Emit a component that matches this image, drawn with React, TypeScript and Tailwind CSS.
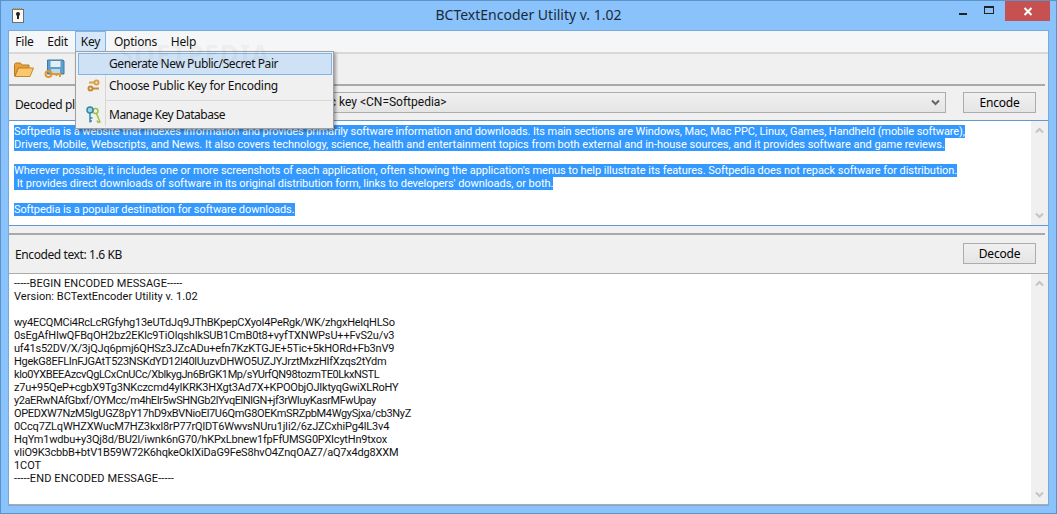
const selectedLines = [
  { text: "Softpedia is a website that indexes information and provides primarily software information and downloads. Its main sections are Windows, Mac, Mac PPC, Linux, Games, Handheld (mobile software),", tracking: "tracking-[-0.09px]" },
  { text: "Drivers, Mobile, Webscripts, and News. It also covers technology, science, health and entertainment topics from both external and in-house sources, and it provides software and game reviews.", tracking: "tracking-[-0.005px]" },
  { text: "", tracking: "" },
  { text: "Wherever possible, it includes one or more screenshots of each application, often showing the application's menus to help illustrate its features. Softpedia does not repack software for distribution.", tracking: "tracking-[-0.05px]" },
  { text: "\u00a0It provides direct downloads of software in its original distribution form, links to developers' downloads, or both.", tracking: "tracking-[-0.055px]" },
  { text: "", tracking: "" },
  { text: "Softpedia is a popular destination for software downloads.", tracking: "tracking-[-0.09px]" },
];

const encodedLines = [
  { text: "-----BEGIN ENCODED MESSAGE-----", tracking: "tracking-[0.06px]" },
  { text: "Version: BCTextEncoder Utility v. 1.02", tracking: "tracking-[0.04px]" },
  { text: "", tracking: "" },
  { text: "wy4ECQMCi4RcLcRGfyhg13eUTdJq9JThBKpepCXyoI4PeRgk/WK/zhgxHeIqHLSo", tracking: "tracking-[-0.25px]" },
  { text: "0sEgAfHIwQFBqOH2bz2EKlc9TiOlqshIkSUB1CmB0t8+vyfTXNWPsU++FvS2u/v3", tracking: "tracking-[-0.16px]" },
  { text: "uf41s52DV/X/3jQJq6pmj6QHSz3JZcADu+efn7KzKTGJE+5Tic+5kHORd+Fb3nV9", tracking: "tracking-[-0.21px]" },
  { text: "HgekG8EFLInFJGAtT523NSKdYD12l40lUuzvDHWO5UZJYJrztMxzHIfXzqs2tYdm", tracking: "tracking-[-0.28px]" },
  { text: "klo0YXBEEAzcvQgLCxCnUCc/XblkygJn6BrGK1Mp/sYUrfQN98tozmTE0LkxNSTL", tracking: "tracking-[-0.41px]" },
  { text: "z7u+95QeP+cgbX9Tg3NKczcmd4yIKRK3HXgt3Ad7X+KPOObjOJIktyqGwiXLRoHY", tracking: "tracking-[-0.21px]" },
  { text: "y2aERwNAfGbxf/OYMcc/m4hEIr5wSHNGb2lYvqElNlGN+jf3rWIuyKasrMFwUpay", tracking: "tracking-[-0.42px]" },
  { text: "OPEDXW7NzM5lgUGZ8pY17hD9xBVNioEl7U6QmG8OEKmSRZpbM4WgySjxa/cb3NyZ", tracking: "tracking-[-0.33px]" },
  { text: "0Ccq7ZLqWHZXWucM7HZ3kxl8rP77rQlDT6WwvsNUru1jIi2/6zJZCxhiPg4lL3v4", tracking: "tracking-[-0.17px]" },
  { text: "HqYm1wdbu+y3Qj8d/BU2l/iwnk6nG70/hKPxLbnew1fpFfUMSG0PXIcytHn9txox", tracking: "tracking-[-0.22px]" },
  { text: "vIiO9K3cbbB+btV1B59W72K6hqkeOkIXiDaG9FeS8hvO4ZnqOAZ7/aQ7x4dg8XXM", tracking: "tracking-[-0.19px]" },
  { text: "1COT", tracking: "tracking-[-0.1px]" },
  { text: "-----END ENCODED MESSAGE-----", tracking: "tracking-[0.12px]" },
];

function FolderIcon() {
  return (
    <svg width="21" height="20" viewBox="0 0 21 20">
      <path d="M1.5 17V5.5L2.5 4h5l1.5 2h7v3H5L2 17z" fill="#e8a33c" stroke="#b87a25" />
      <path d="M2 17.5 5.5 9h15l-3.5 8.5z" fill="#fbc76b" stroke="#c5882d" />
    </svg>
  );
}

function SaveKeyIcon() {
  return (
    <svg width="21" height="20" viewBox="0 0 21 20">
      <path d="M3.5 1h15.5l1 1v13h-16.500z" fill="#5f9fc8" stroke="#3d7ba6" />
      <rect x="6.500" y="2" width="10" height="6" fill="#e3eef5" />
      <rect x="7" y="10" width="9" height="5" fill="#bcd8ea" />
      <circle cx="4.500" cy="15" r="3" fill="none" stroke="#e09a2e" strokeWidth="2" />
      <path d="M7.500 15H16v3M12.500 15v2" fill="none" stroke="#e09a2e" strokeWidth="2" />
    </svg>
  );
}

function KeysSmallIcon() {
  return (
    <svg width="13" height="13" viewBox="0 0 13 13">
      <circle cx="3.500" cy="9.500" r="2" fill="none" stroke="#c98a34" strokeWidth="2" />
      <path d="M5.500 9.500H12" stroke="#c98a34" strokeWidth="2" />
      <circle cx="9.500" cy="3.500" r="2" fill="none" stroke="#d8a24c" strokeWidth="2" />
      <path d="M7.500 3.500H2" stroke="#d8a24c" strokeWidth="2" />
    </svg>
  );
}

function KeyDatabaseIcon() {
  return (
    <svg width="16" height="18" viewBox="0 0 16 18">
      <circle cx="10.500" cy="5" r="2.500" fill="none" stroke="#a3bf4a" strokeWidth="1.500" />
      <path d="M11.500 7.500 15 16l-2 .5-1-2" fill="none" stroke="#a3bf4a" strokeWidth="1.500" />
      <circle cx="5" cy="4" r="3" fill="#9fd4e0" stroke="#2f8ba5" strokeWidth="1.500" />
      <path d="M5 7v9.500M5 12h2.500M5 15h2" fill="none" stroke="#2f8ba5" strokeWidth="1.500" />
    </svg>
  );
}

function AppIcon() {
  return (
    <svg width="12" height="15" viewBox="0 0 12 15">
      <rect x="0.500" y="1.500" width="11" height="13" fill="#fbfbf3" stroke="#6d6d6d" />
      <path d="M1 1h1M3 1h1M5 1h1M7 1h1M9 1h1" stroke="#a58a2b" strokeWidth="2" />
      <circle cx="6" cy="6" r="2" fill="#222" />
      <rect x="5" y="7" width="2" height="4" fill="#222" />
    </svg>
  );
}

function ChevronIcon({ dir, color }: { dir: "up" | "down"; color: string }) {
  return (
    <svg width="9" height="7" viewBox="0 0 9 7">
      <path d={dir === "up" ? "M1 5.500 4.500 2 8 5.500" : "M1 1.500 4.500 5 8 1.500"} fill="none" stroke={color} strokeWidth="2" />
    </svg>
  );
}

function Scrollbar() {
  return (
    <div className="flex w-[17px] shrink-0 flex-col items-center justify-between bg-[#f0f0f0] py-[6px]">
      <ChevronIcon dir="up" color="#c4c4c4" />
      <ChevronIcon dir="down" color="#c4c4c4" />
    </div>
  );
}

function Button({ label }: { label: string }) {
  return (
    <div className="flex h-[21px] w-[73px] shrink-0 items-center justify-center border border-[#acacac] bg-gradient-to-b from-[#f0f0f0] to-[#e5e5e5] text-[#000]">
      {label}
    </div>
  );
}

function MenuItem({ label, className }: { label: string; className: string }) {
  return <div className={`flex h-[21px] items-center justify-center ${className}`}>{label}</div>;
}

function KeyMenu() {
  return (
    <div className="absolute left-[66px] top-[20px] flex h-[78px] w-[259px] flex-col border border-[#a0a0a0] bg-[#f0f0f0] p-px shadow-[2px_2px_3px_rgba(0,0,0,0.35)]">
      <div className="ml-px flex h-[22px] w-[254px] items-center border border-[#7fb4e8] bg-[#cfe2f5] pb-[1px] pl-[30px] tracking-[-0.42px]">
        Generate New Public/Secret Pair
      </div>
      <div className="ml-px flex h-[21px] items-center">
        <span className="flex w-[28px] justify-center pl-[2px]">
          <KeysSmallIcon />
        </span>
        <span className="ml-[3px] tracking-[-0.28px]">Choose Public Key for Encoding</span>
      </div>
      <div className="ml-[28px] mt-[4px] h-px bg-[#d7d7d7]" />
      <div className="ml-px flex flex-1 items-center pt-px">
        <span className="flex w-[28px] justify-center pl-[2px]">
          <KeyDatabaseIcon />
        </span>
        <span className="ml-[3px] tracking-[-0.5px]">Manage Key Database</span>
      </div>
      <div className="absolute bottom-[2px] left-[29px] top-[23px] w-px bg-[#d7d7d7]" />
    </div>
  );
}

export default function App() {
  return (
    <div className="flex h-[514px] w-[1057px] flex-col overflow-hidden border border-[#5b93c9] bg-[#8ac3fb] font-['Noto_Sans',sans-serif] text-[12px] leading-[13px] tracking-[-0.2px] text-[#111]">
      {/* title bar */}
      <div className="relative flex h-[29px] shrink-0 items-center pl-[11px]">
        <AppIcon />
        <div className="absolute left-0 right-0 top-[5px] text-center text-[14px] leading-[18px] tracking-normal text-[#1a2a3a]">
          BCTextEncoder Utility v. 1.02
        </div>
        <div className="ml-auto flex h-[20px] self-start">
          <div className="flex w-[26px] items-end justify-center pb-[6px]">
            <div className="h-[2px] w-[8px] bg-[#222]" />
          </div>
          <div className="flex w-[26px] items-center justify-center pb-[2px]">
            <div className="h-[8px] w-[10px] border border-t-2 border-[#222]" />
          </div>
          <div className="ml-[3px] mr-[6px] flex w-[45px] items-center justify-center bg-[#c75050]">
            <svg width="10" height="9" viewBox="0 0 10 9">
              <path d="M1.500 1 8.500 8M8.500 1 1.500 8" stroke="#fff" strokeWidth="2" />
            </svg>
          </div>
        </div>
      </div>

      {/* client area */}
      <div className="relative mx-[7px] mb-[7px] flex min-h-0 flex-1 flex-col border border-[#7ba9d6] bg-[#f0f0f0]">
        {/* menu bar */}
        <div className="flex h-[21px] shrink-0 bg-[#f5f6f7]">
          <MenuItem label="File" className="w-[31px]" />
          <MenuItem label="Edit" className="w-[35px]" />
          <MenuItem label="Key" className="w-[31px] border border-[#7fb4e8] bg-[#d5e7f8]" />
          <MenuItem label="Options" className="w-[59px]" />
          <MenuItem label="Help" className="w-[37px]" />
        </div>

        {/* toolbar */}
        <div className="flex h-[32px] shrink-0 items-center gap-[10px] border-t-2 border-[#d8d8d8] pl-[4px]">
          <FolderIcon />
          <SaveKeyIcon />
        </div>

        {/* decoded row */}
        <div className="mr-[3px] flex h-[36px] shrink-0 items-center border-t-2 border-[#a9a9a9] pb-[2px] pl-[6px] pr-[9px]">
          <span className="w-[150px] shrink-0 pt-[4px] tracking-[-0.4px]">Decoded plain text: 600 B</span>
          <div className="ml-[6px] flex h-[21px] flex-1 items-center justify-between border border-[#acacac] bg-gradient-to-b from-[#f0f0f0] to-[#e5e5e5] pl-[131px] pr-[5px] font-['Roboto',sans-serif] tracking-normal">
            <span>Public key &lt;CN=Softpedia&gt;</span>
            <ChevronIcon dir="down" color="#666" />
          </div>
          <div className="ml-[17px]">
            <Button label="Encode" />
          </div>
        </div>

        {/* decoded text */}
        <div className="flex h-[106px] shrink-0 border-y border-[#5f9ad3] bg-white">
          <div className="min-w-0 flex-1 overflow-hidden pl-[5px] pt-[4px] font-['Roboto',sans-serif] text-[11px]">
            {selectedLines.map((line, i) => (
              <div key={i} className={`h-[13px] whitespace-pre ${line.tracking}`}>
                {line.text && <span className="inline-block h-[13px] bg-[#3399ff] text-white">{line.text}</span>}
              </div>
            ))}
          </div>
          <Scrollbar />
        </div>

        {/* encoded row */}
        <div className="mr-[3px] mt-[7px] flex h-[40px] shrink-0 items-center border-t-2 border-[#a9a9a9] pb-[2px] pl-[6px] pr-[9px]">
          <span className="pt-[3px] tracking-[-0.4px]">Encoded text: 1.6 KB</span>
          <div className="ml-auto">
            <Button label="Decode" />
          </div>
        </div>

        {/* encoded text */}
        <div className="flex min-h-0 flex-1 border-y border-t-[#ababab] border-b-[#ababab] bg-white">
          <div className="min-w-0 flex-1 overflow-hidden pl-[5px] pt-[3px] font-['Roboto',sans-serif] text-[11px]">
            {encodedLines.map((line, i) => (
              <div key={i} className={`h-[13px] whitespace-pre ${line.tracking}`}>
                {line.text}
              </div>
            ))}
          </div>
          <Scrollbar />
        </div>

        <KeyMenu />
        <div className="pointer-events-none absolute left-[110px] top-[10px] text-[26px] font-bold leading-[26px] tracking-[1px] text-black/[0.05]">
          SOFTPEDIA
        </div>
      </div>
    </div>
  );
}
